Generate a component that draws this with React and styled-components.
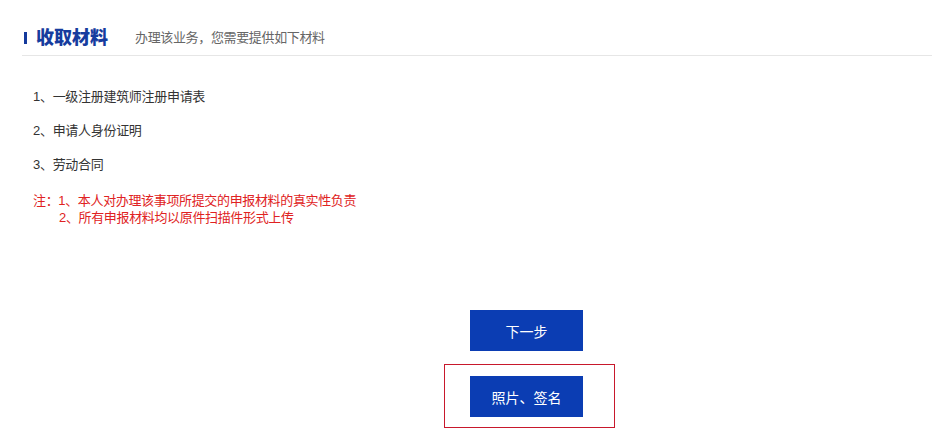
import React from "react";
import styled, { createGlobalStyle } from "styled-components";

const Global = createGlobalStyle`
  html, body { margin: 0; padding: 0; background: #fff; }
  body { font-family: "Liberation Sans", "Noto Sans CJK SC", sans-serif; }
`;

const Page = styled.div`
  width: 932px;
  height: 439px;
  padding-left: 22px;
  box-sizing: border-box;
  overflow: hidden;
`;

const Header = styled.div`
  display: flex;
  align-items: center;
  height: 56px;
  box-sizing: border-box;
  padding: 21px 0 0 2px;
  border-bottom: 1px solid #e6e6e6;
`;

const Bar = styled.span`
  display: block;
  width: 3px;
  height: 12px;
  background: #143a9c;
`;

const Title = styled.h2`
  margin: 0 0 0 9px;
  font-size: 18px;
  font-weight: 900;
  color: #163c9e;
  line-height: 24px;
`;

const Subtitle = styled.span`
  margin-left: 27px;
  font-size: 13px;
  color: #666;
  line-height: 20px;
  letter-spacing: -0.35px;
`;

const List = styled.ul`
  list-style: none;
  margin: 24px 0 0;
  padding: 0 0 0 11px;
`;

const Item = styled.li`
  font-size: 13px;
  line-height: 34px;
  color: #333;
  letter-spacing: -0.3px;
`;

const Notes = styled.div`
  margin: 10px 0 0 11px;
  color: #e02222;
  font-size: 13px;
  line-height: 17px;
  letter-spacing: -0.35px;
`;

const NoteLine = styled.div`
  padding-left: ${(p) => (p.$indent ? "26px" : "0")};
`;

const Actions = styled.div`
  display: flex;
  flex-direction: column;
  align-items: flex-start;
  gap: 13px;
  margin: 84px 0 0 422px;
`;

const Button = styled.button`
  width: 113px;
  height: 41px;
  border: none;
  background: #0b3db3;
  color: #fff;
  font-family: inherit;
  font-size: 14px;
  cursor: pointer;
  margin-left: ${(p) => p.$offset || 0}px;
`;

const Highlight = styled.div`
  border: 1px solid #c8182c;
  padding: 11px 31px 10px 25px;
  display: flex;
`;

export default function App() {
  return (
    <>
      <Global />
      <Page>
        <Header>
          <Bar />
          <Title>收取材料</Title>
          <Subtitle>办理该业务，您需要提供如下材料</Subtitle>
        </Header>
        <List>
          <Item>1、一级注册建筑师注册申请表</Item>
          <Item>2、申请人身份证明</Item>
          <Item>3、劳动合同</Item>
        </List>
        <Notes>
          <NoteLine>注：1、本人对办理该事项所提交的申报材料的真实性负责</NoteLine>
          <NoteLine $indent>2、所有申报材料均以原件扫描件形式上传</NoteLine>
        </Notes>
        <Actions>
          <Button $offset={26}>下一步</Button>
          <Highlight>
            <Button>照片、签名</Button>
          </Highlight>
        </Actions>
      </Page>
    </>
  );
}
